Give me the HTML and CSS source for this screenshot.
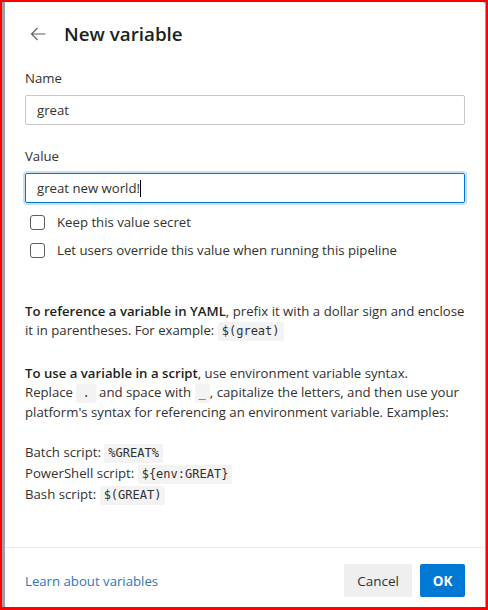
FILE: index.html
```html
<!DOCTYPE html>
<html>
<head>
<meta charset="utf-8">
<link rel="stylesheet" href="styles.css">
</head>
<body>
<div class="frame">
  <div class="backdrop">
    <div class="dialog">
      <div class="header">
        <span class="back">
          <svg width="16" height="16" viewBox="0 0 16 16"><path d="M15.5 8H1.6M7.5 2 1.5 8l6 6" fill="none" stroke="#605e5c" stroke-width="1.1"/></svg>
        </span>
        <h1 class="title">New variable</h1>
      </div>
      <div class="content">
        <label class="label">Name</label>
        <div class="input">great</div>
        <label class="label label-value">Value</label>
        <div class="input input-focus">great new world!<span class="caret"></span></div>
        <div class="check check-first"><span class="box"></span><span>Keep this value secret</span></div>
        <div class="check"><span class="box"></span><span>Let users override this value when running this pipeline</span></div>
        <p class="para para-first"><b>To reference a variable in YAML</b>, prefix it with a dollar sign and enclose it in parentheses. For example: <code>$(great)</code></p>
        <p class="para"><b>To use a variable in a script</b>, use environment variable syntax.<br>Replace <code class="wide">.</code> and space with <code>_</code>, capitalize the letters, and then use your platform's syntax for referencing an environment variable. Examples:</p>
        <div class="examples">
          <div class="ex">Batch script: <code>%GREAT%</code></div>
          <div class="ex">PowerShell script: <code>${env:GREAT}</code></div>
          <div class="ex">Bash script: <code>$(GREAT)</code></div>
        </div>
      </div>
      <div class="footer">
        <a class="link" href="#">Learn about variables</a>
        <div class="buttons">
          <button class="btn btn-cancel">Cancel</button>
          <button class="btn btn-ok">OK</button>
        </div>
      </div>
    </div>
  </div>
</div>
</body>
</html>
```
FILE: styles.css
```css
* { box-sizing: border-box; }
html, body { margin: 0; padding: 0; }
body {
  width: 488px;
  height: 610px;
  background: #ff0000;
  font-family: "Open Sans", sans-serif;
  color: #323130;
  font-size: 13.2px;
}
.frame {
  padding: 2px 2px 3px 2px;
  height: 610px;
}
.backdrop {
  background: #a0a0a0;
  height: 100%;
  padding-left: 3px;
  padding-right: 1px;
}
.dialog {
  background: #fff;
  height: 100%;
  border-top-right-radius: 3px;
  display: flex;
  flex-direction: column;
}
.header {
  display: flex;
  align-items: center;
  height: 48px;
  margin-top: 8px;
  padding-left: 25px;
}
.back { width: 16px; height: 16px; display: flex; margin-right: 18px; }
.title {
  margin: 0;
  font-size: 18.8px;
  font-weight: 600;
  color: #201f1e;
  line-height: 28px;
}
.content {
  flex: 1;
  padding: 10px 20px 0 20px;
}
.label {
  display: block;
  line-height: 20px;
  margin-bottom: 7px;
}
.label-value { margin-top: 21px; }
.input {
  height: 30px;
  border: 1px solid #c8c8c8;
  border-radius: 2px;
  padding: 0 11px;
  line-height: 28px;
  color: #323130;
}
.input-focus {
  border-color: #0078d4;
  box-shadow: 0 0 0 2px #c7e0f4;
}
.caret {
  display: inline-block;
  width: 1px;
  height: 17px;
  background: #000;
  vertical-align: -4px;
}
.check {
  display: flex;
  align-items: center;
  height: 28px;
  padding-left: 5px;
}
.check-first { margin-top: 5px; }
.box {
  width: 15px;
  height: 15px;
  border: 1px solid #605e5c;
  border-radius: 3px;
  margin-right: 12px;
  flex: none;
}
.para {
  margin: 0;
  line-height: 19px;
  color: #323130;
}
.para-first { margin-top: 38px; margin-bottom: 23px; }
b { font-weight: 600; color: #201f1e; }
code {
  display: inline-block;
  font-family: "DejaVu Sans Mono", monospace;
  font-size: 12px;
  line-height: 19px;
  background: #f3f3f3;
  padding: 0 4px;
  border-radius: 2px;
  color: #323130;
}
code.wide { padding: 0 6px; }
.examples { margin-top: 20px; }
.ex { height: 21px; line-height: 21px; }
.footer {
  border-top: 1px solid #eaeaea;
  height: 60px;
  display: flex;
  align-items: center;
  justify-content: space-between;
  padding: 6px 20px 0 20px;
}
.link {
  color: #2b78bd;
  text-decoration: none;
}
.buttons { display: flex; gap: 8px; }
.btn {
  height: 33px;
  border: none;
  border-radius: 2px;
  font-family: inherit;
  font-size: 13.5px;
  padding: 0;
}
.btn-cancel { background: #efefef; color: #323130; width: 68px; }
.btn-ok { background: #0078d4; color: #fff; font-weight: 700; width: 45px; }
```
